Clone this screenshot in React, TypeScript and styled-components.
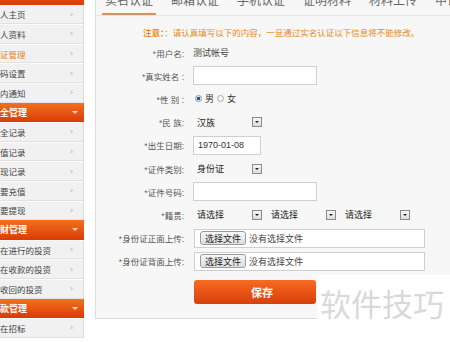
import styled, { createGlobalStyle } from "styled-components";

const GlobalStyle = createGlobalStyle`
  html, body {
    margin: 0;
    padding: 0;
    background: #fff;
    overflow: hidden;
  }
  body {
    width: 450px;
    height: 342px;
    font-family: "Liberation Sans", "Noto Sans CJK SC", sans-serif;
  }
`;

type MenuEntry = { title: string; items: { label: string; active?: boolean }[] };

const menu: MenuEntry[] = [
  {
    title: "我的账户",
    items: [
      { label: "个人主页" },
      { label: "个人资料" },
      { label: "认证管理", active: true },
      { label: "密码设置" },
      { label: "站内通知" },
    ],
  },
  {
    title: "安全管理",
    items: [
      { label: "安全记录" },
      { label: "充值记录" },
      { label: "提现记录" },
      { label: "我要充值" },
      { label: "我要提现" },
    ],
  },
  {
    title: "理财管理",
    items: [{ label: "正在进行的投资" }, { label: "正在收款的投资" }, { label: "已收回的投资" }],
  },
  { title: "借款管理", items: [{ label: "正在招标" }] },
];

const tabs = ["实名认证", "邮箱认证", "手机认证", "证明材料", "材料上传", "申请认证"];

const App = function () {
  return (
    <>
      <GlobalStyle />
      <Page>
        <Sidebar>
          {menu.map((group) => (
            <div key={group.title}>
              <MenuHeader>
                <span>{group.title}</span>
                <Chevron />
              </MenuHeader>
              {group.items.map((item) => (
                <MenuItem key={item.label} $active={item.active}>
                  <span>{item.label}</span>
                  <Arrow>›</Arrow>
                </MenuItem>
              ))}
            </div>
          ))}
        </Sidebar>

        <Panel>
          <TabBar>
            {tabs.map((t, i) => (
              <Tab key={t} $active={i === 0}>
                {t}
              </Tab>
            ))}
          </TabBar>

          <Notice>
            <b>注意：</b>：请认真填写以下的内容，一旦通过实名认证以下信息将不能修改。
          </Notice>

          <Form>
            <Row>
              <Label>用户名:</Label>
              <Value>测试帐号</Value>
            </Row>
            <Row>
              <Label>真实姓名 :</Label>
              <TextBox $width={124} />
            </Row>
            <Row>
              <Label>性 别 :</Label>
              <Radios>
                <Radio $checked />
                <span>男</span>
                <Radio />
                <span>女</span>
              </Radios>
            </Row>
            <Row>
              <Label>民 族:</Label>
              <Selects>
                <Select>
                  <span>汉族</span>
                  <DropBox />
                </Select>
              </Selects>
            </Row>
            <Row>
              <Label>出生日期:</Label>
              <TextBox $width={68}>1970-01-08</TextBox>
            </Row>
            <Row>
              <Label>证件类别:</Label>
              <Selects>
                <Select>
                  <span>身份证</span>
                  <DropBox />
                </Select>
              </Selects>
            </Row>
            <Row>
              <Label>证件号码:</Label>
              <TextBox $width={124} />
            </Row>
            <Row>
              <Label>籍贯:</Label>
              <Selects>
                {[0, 1, 2].map((k) => (
                  <Select key={k}>
                    <span>请选择</span>
                    <DropBox />
                  </Select>
                ))}
              </Selects>
            </Row>
            <Row>
              <Label>身份证正面上传:</Label>
              <FileBox>
                <FileButton>选择文件</FileButton>
                <span>没有选择文件</span>
              </FileBox>
            </Row>
            <Row>
              <Label>身份证背面上传:</Label>
              <FileBox>
                <FileButton>选择文件</FileButton>
                <span>没有选择文件</span>
              </FileBox>
            </Row>
            <SubmitRow>
              <span />
              <SaveButton>保存</SaveButton>
            </SubmitRow>
          </Form>
        </Panel>

        <Watermark>软件技巧</Watermark>
      </Page>
    </>
  );
};

export default App;

const Page = styled.div`
  position: relative;
  display: flex;
  align-items: flex-start;
  width: 450px;
  height: 342px;
  overflow: hidden;
`;

const Sidebar = styled.div`
  flex-shrink: 0;
  width: 96px;
  margin-left: -12px;
  margin-top: -15px;
  margin-right: 11px;
  font-size: 8.5px;
`;

const MenuHeader = styled.div`
  box-sizing: border-box;
  height: 19.6px;
  display: flex;
  align-items: center;
  justify-content: space-between;
  padding: 0 6px 0 3px;
  background: linear-gradient(#f4701f, #d93b06);
  color: #fff;
  font-weight: bold;
  font-size: 9px;
`;

const Chevron = styled.span`
  width: 0;
  height: 0;
  border-left: 3px solid transparent;
  border-right: 3px solid transparent;
  border-top: 3px solid #fbd3bd;
`;

const MenuItem = styled.div<{ $active?: boolean }>`
  box-sizing: border-box;
  height: 19.6px;
  display: flex;
  align-items: center;
  justify-content: space-between;
  padding: 0 10px 0 3.5px;
  background: #f1f1f1;
  border-top: 1px solid #fbfbfb;
  border-bottom: 1px solid #e1e1e1;
  border-right: 1px solid #dadada;
  color: ${(p) => (p.$active ? "#e9821f" : "#444")};
`;

const Arrow = styled.span`
  color: #aaa;
  font-size: 8px;
`;

const Panel = styled.div`
  box-sizing: border-box;
  flex: 1;
  min-width: 0;
  height: 327px;
  margin-top: -8px;
  margin-right: -30px;
  border: 1px solid #dedede;
  background: #f7f7f7;
`;

const TabBar = styled.div`
  box-sizing: border-box;
  height: 23px;
  display: flex;
  padding-left: 6px;
  border-bottom: 1px solid #e6e6e6;
  white-space: nowrap;
`;

const Tab = styled.div<{ $active?: boolean }>`
  box-sizing: border-box;
  height: 22px;
  padding: 1px 3px 0;
  margin-right: 12px;
  font-size: 12px;
  line-height: 14px;
  color: #666;
  border-bottom: 2px solid ${(p) => (p.$active ? "#d99160" : "transparent")};
`;

const Notice = styled.div`
  margin-top: 11px;
  padding-left: 47px;
  font-size: 8.5px;
  line-height: 12px;
  color: #e58a21;
  white-space: nowrap;

  b {
    font-weight: bold;
  }
`;

const Form = styled.div`
  margin-top: 2px;
`;

const Row = styled.div`
  display: grid;
  grid-template-columns: 88px 1fr;
  column-gap: 9px;
  align-items: center;
  height: 23.2px;
  font-size: 9px;
  color: #333;
`;

const SubmitRow = styled(Row)`
  margin-top: 7px;
  height: 24px;
`;

const Label = styled.div`
  text-align: right;
  color: #555;
  white-space: nowrap;
  font-size: 8.5px;

  &::before {
    content: "*";
    color: #666;
  }
`;

const Value = styled.div`
  color: #444;
`;

const TextBox = styled.div<{ $width: number }>`
  box-sizing: border-box;
  width: ${(p) => p.$width}px;
  height: 19px;
  display: flex;
  align-items: center;
  padding-left: 4px;
  background: #fff;
  border: 1px solid #cfcfcf;
  color: #333;
`;

const Radios = styled.div`
  display: flex;
  align-items: center;
  gap: 1px;
  padding-left: 2px;

  span + span {
    margin-left: 2px;
  }
`;

const Radio = styled.span<{ $checked?: boolean }>`
  box-sizing: border-box;
  width: 7px;
  height: 7px;
  border-radius: 50%;
  border: 1px solid ${(p) => (p.$checked ? "#7d96b8" : "#aaa")};
  background: ${(p) =>
    p.$checked ? "radial-gradient(circle, #3a5478 0 1.6px, #e8eef6 2px)" : "#f5f5f5"};
`;

const Selects = styled.div`
  display: flex;
  gap: 7px;
  padding-left: 2px;
`;

const Select = styled.div`
  box-sizing: border-box;
  width: 67px;
  display: flex;
  align-items: center;
  justify-content: space-between;
  padding-left: 2px;
  color: #222;
`;

const DropBox = styled.span`
  box-sizing: border-box;
  position: relative;
  width: 10px;
  height: 10px;
  border: 1px solid #8a8a8a;
  background: linear-gradient(#f6f6f6, #dcdcdc);

  &::after {
    content: "";
    position: absolute;
    left: 2px;
    top: 3px;
    border-left: 2px solid transparent;
    border-right: 2px solid transparent;
    border-top: 2px solid #222;
  }
`;

const FileBox = styled.div`
  box-sizing: border-box;
  width: 231px;
  height: 19px;
  margin-left: 1px;
  display: flex;
  align-items: center;
  gap: 3px;
  padding-left: 5px;
  background: #fff;
  border: 1px solid #cfcfcf;
  color: #444;
`;

const FileButton = styled.span`
  box-sizing: border-box;
  height: 14px;
  display: flex;
  align-items: center;
  padding: 0 4px;
  border: 1px solid #9a9a9a;
  border-radius: 3px;
  background: linear-gradient(#f7f7f7, #dedede);
  color: #222;
`;

const SaveButton = styled.div`
  box-sizing: border-box;
  width: 122px;
  height: 24px;
  margin-left: 1px;
  display: flex;
  align-items: center;
  justify-content: center;
  padding-left: 14px;
  border-radius: 3px;
  background: linear-gradient(#f86a22, #d83f0a);
  color: #fff;
  font-size: 11px;
  font-weight: bold;
`;

const Watermark = styled.div`
  position: absolute;
  left: 317px;
  top: 275px;
  width: 133px;
  height: 67px;
  padding: 9px 0 0 3px;
  box-sizing: border-box;
  background: #fff;
  color: #d9d9d9;
  font-family: "Noto Sans CJK SC", sans-serif;
  font-size: 31px;
  line-height: 38px;
`;
